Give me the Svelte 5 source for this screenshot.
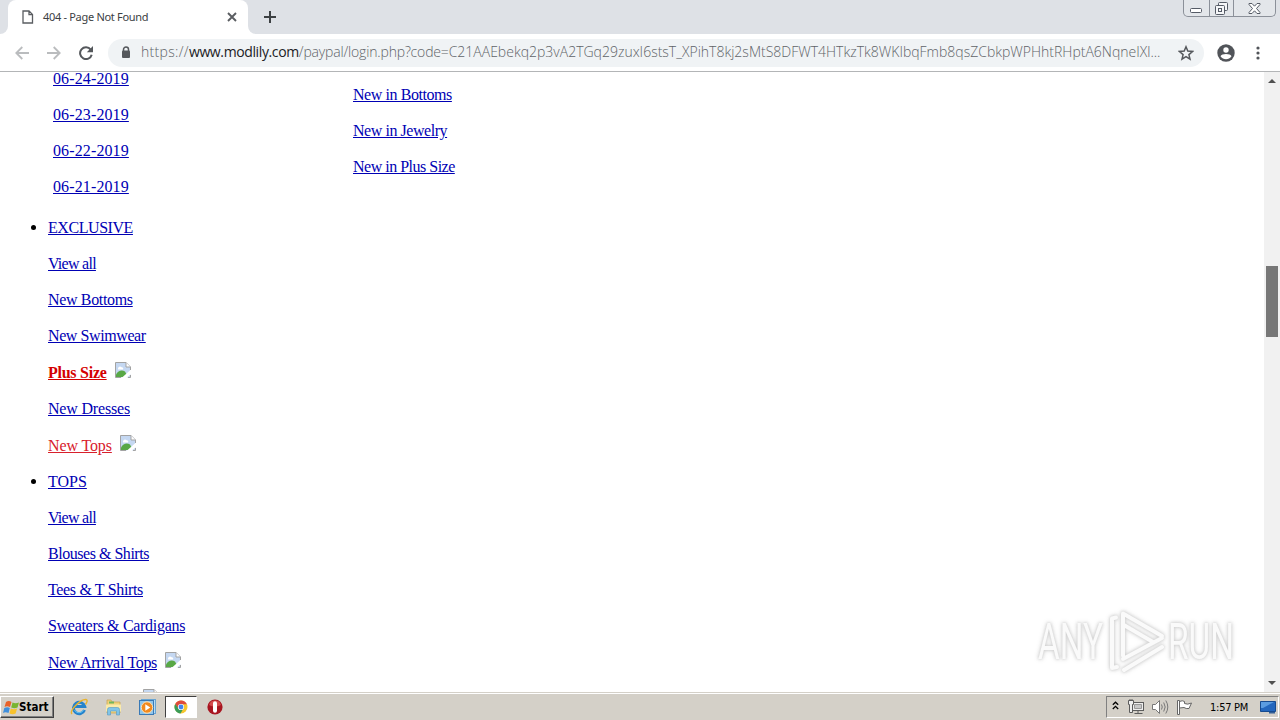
<script>
  const url = {
    scheme: "https://",
    host: "www.modlily.com",
    path: "/paypal/login.php?code=",
    code: "C21AAEbekq2p3vA2TGq29zuxI6stsT_XPihT8kj2sMtS8DFWT4HTkzTk8WKIbqFmb8qsZCbkpWPHhtRHptA6NqneIXl...",
  };

  const dates = ["06-24-2019", "06-23-2019", "06-22-2019", "06-21-2019"];

  // track = letter spacing in px
  const newIn = [
    { text: "New in Bottoms", track: -0.43 },
    { text: "New in Jewelry", track: -0.45 },
    { text: "New in Plus Size", track: -0.5 },
  ];

  const sections = [
    {
      title: "EXCLUSIVE",
      track: -0.44,
      links: [
        { text: "View all", track: -0.72 },
        { text: "New Bottoms", track: -0.34 },
        { text: "New Swimwear", track: -0.41 },
        { text: "Plus Size", track: -0.25, img: true, tone: "hot" },
        { text: "New Dresses", track: -0.18 },
        { text: "New Tops", track: -0.12, img: true, tone: "red" },
      ],
    },
    {
      title: "TOPS",
      track: 0,
      links: [
        { text: "View all", track: -0.72 },
        { text: "Blouses & Shirts", track: -0.47 },
        { text: "Tees & T Shirts", track: -0.34 },
        { text: "Sweaters & Cardigans", track: -0.3 },
        { text: "New Arrival Tops", track: -0.32, img: true },
        { text: "", img: true },
      ],
    },
  ];
</script>

{#snippet broken()}
  <svg class="broken" width="16" height="16" viewBox="0 0 16 16">
    <path d="M.5.5H11L15.500 5v10.500H.5z" fill="#c5d8f2" />
    <path d="M3 6.500a2 2 0 0 1 3.500-1.300A1.500 1.500 0 0 1 8 7.500H3z" fill="#fff" />
    <path d="M1 15v-2.500c2-4 6-5 9-3l3 5.500z" fill="#58a846" />
    <path d="M6.500 16L16 7.500V12l-4.500 4z" fill="#fff" />
    <path d="M6 15.500H.5V.5H11L15.500 5v3M15.500 13v2.500H13" fill="none" stroke="#a3a3a3" />
    <path d="M11 .5V5h4.500" fill="#fff" stroke="#a3a3a3" />
  </svg>
{/snippet}

<div class="screen">
  <header class="tabs">
    <div class="corner left"></div>
    <div class="tab">
      <svg width="12" height="14" viewBox="0 0 12 14" fill="none" stroke="#5a5d61" stroke-width="1.300">
        <path d="M1 1h6l3.500 3.500V13H1zM7 1v3.700h3.500" />
      </svg>
      <span class="title">404 - Page Not Found</span>
      <svg class="close" width="10" height="10" viewBox="0 0 10 10" stroke="#5a5d61" stroke-width="1.900">
        <path d="M1 1l8 8M9 1L1 9" />
      </svg>
    </div>
    <div class="corner right"></div>
    <svg class="plus" width="12" height="12" viewBox="0 0 12 12" stroke="#3c4043" stroke-width="2">
      <path d="M6 0v12M0 6h12" />
    </svg>
    <div class="winbtns">
      <span class="wb">
        <svg width="13" height="6" viewBox="0 0 13 6"><rect x=".5" y=".5" width="11" height="4" rx="1" fill="#fff" stroke="#555b66" /></svg>
      </span>
      <span class="wb mid">
        <svg width="13" height="13" viewBox="0 0 13 13" fill="#f5f6f8" stroke="#555b66">
          <rect x="3.500" y=".5" width="9" height="8" rx="1" />
          <rect x=".5" y="3.500" width="9" height="9" rx="1" />
          <rect x="3.500" y="6.500" width="3" height="3" />
        </svg>
      </span>
      <span class="wb last">
        <svg width="13" height="11" viewBox="0 0 13 11" fill="#fff" stroke="#555b66">
          <path d="M1 .5h3l2.500 2.700L9 .5h3v1L8.500 5.500 12 9.500v1H9L6.500 7.800 4 10.500H1v-1l3.500-4L1 1.500z" />
        </svg>
      </span>
    </div>
  </header>

  <nav class="toolbar">
    <svg class="nav" width="14" height="14" viewBox="0 0 14 14" fill="none" stroke="#babcbe" stroke-width="1.800">
      <path d="M14 7H1.500M7.300 1L1.300 7l6 6" />
    </svg>
    <svg class="nav" width="14" height="14" viewBox="0 0 14 14" fill="none" stroke="#babcbe" stroke-width="1.800">
      <path d="M0 7h12.500M6.700 1l6 6-6 6" />
    </svg>
    <svg class="nav" width="14" height="14" viewBox="0 0 14 14">
      <path d="M11.700 3.600A5.900 5.900 0 1 0 12.700 8.700" fill="none" stroke="#55585c" stroke-width="2" />
      <path d="M14 0v6.200H7.800z" fill="#55585c" />
    </svg>
    <div class="omnibox">
      <svg class="lock" width="10" height="13" viewBox="0 0 10 13">
        <path d="M2.500 6V3.500a2.500 2.500 0 0 1 5 0V6" fill="none" stroke="#55585c" stroke-width="1.500" />
        <rect x="1" y="4.500" width="8" height="7.500" rx="1" fill="#55585c" />
      </svg>
      <div class="url">
        <span class="scheme">{url.scheme}</span><span class="host">{url.host}</span><span class="path">{url.path}</span><span class="code">{url.code}</span>
      </div>
      <svg class="star" width="16" height="16" viewBox="0 0 16 16" fill="none" stroke="#55585c" stroke-width="1.500">
        <path d="M8 1.800l1.800 4.300 4.700.4-3.600 3.100 1.100 4.600L8 11.700l-4 2.500 1.100-4.600L1.500 6.500l4.700-.4z" />
      </svg>
    </div>
    <svg class="user" width="18" height="18" viewBox="0 0 18 18">
      <circle cx="9" cy="9" r="8.700" fill="#515459" />
      <circle cx="9" cy="6" r="2.700" fill="#fff" />
      <path d="M3.500 12.200c1-3 10-3 11 0-2.500 4-8.500 4-11 0z" fill="#fff" />
    </svg>
    <svg class="dots" width="4" height="14" viewBox="0 0 4 14" fill="#515459">
      <circle cx="2" cy="2" r="1.600" /><circle cx="2" cy="7" r="1.600" /><circle cx="2" cy="12" r="1.600" />
    </svg>
  </nav>

  <div class="view">
    <main>
      <div class="columns">
        <div class="dates">
          {#each dates as date}
            <div class="row"><a href="#top">{date}</a></div>
          {/each}
        </div>
        <div class="newin">
          {#each newIn as item}
            <div class="row"><a href="#top" style:letter-spacing="{item.track}px">{item.text}</a></div>
          {/each}
        </div>
      </div>
      {#each sections as section}
        <section>
          <div class="row head">
            <i class="bullet"></i>
            <a href="#top" style:letter-spacing="{section.track}px">{section.title}</a>
          </div>
          {#each section.links as link}
            <div class="row" class:pic={link.img}>
              {#if link.text}
                <a href="#top" class={link.tone} style:letter-spacing="{link.track}px">{link.text}</a>
              {:else}
                <span class="gap"></span>
              {/if}
              {#if link.img}{@render broken()}{/if}
            </div>
          {/each}
        </section>
      {/each}
    </main>

    <div class="scrollbar">
      <svg width="8" height="4" viewBox="0 0 8 4" fill="#505050"><path d="M0 4l4-4 4 4z" /></svg>
      <div class="thumb"></div>
      <svg width="8" height="4" viewBox="0 0 8 4" fill="#505050"><path d="M0 0l4 4 4-4z" /></svg>
    </div>

    <svg class="watermark" width="220" height="80" viewBox="0 0 220 80">
      <g class="word">
        <text x="8" y="53" textLength="65" lengthAdjust="spacingAndGlyphs">ANY</text>
        <text x="138" y="53" textLength="66" lengthAdjust="spacingAndGlyphs">RUN</text>
      </g>
      <g class="play">
        <path d="M86 11.500l-4 1V62l5-1" />
        <path d="M93 50V7.500L132 30" />
        <path d="M93 18.500L123 36" />
        <path d="M93 53l39-21" />
        <path d="M94 64l38-23" />
      </g>
    </svg>
  </div>

  <footer class="taskbar">
    <div class="start">
      <svg width="17" height="15" viewBox="0 0 17 15">
        <path d="M3 2c2-1.500 4-1 5.500 0L7 7C5 6 3 6 1.500 7z" fill="#e8622a" />
        <path d="M9.500 2.400c2 1 4 1 6.500 0L14.500 7.500c-2 1-4 1-6.300 0z" fill="#79b530" />
        <path d="M1.300 8c2-1 4-1 5.500 0l-1.300 5c-2-1-4-1-5.500 0z" fill="#3f8fdc" />
        <path d="M7.800 8.500c2 1 4 1 6.300 0l-1.500 5c-2 1-4 1-6.100 0z" fill="#f8c22c" />
      </svg>
      <span>Start</span>
    </div>
    <div class="apps">
      <span class="app">
        <svg width="18" height="18" viewBox="0 0 18 18" fill="none">
          <path d="M14.500 12a5.700 5.700 0 1 1 .2-3.500H5" stroke="#2583cc" stroke-width="3" />
          <path d="M13.500 12a5 5 0 0 1-9 0" stroke="#65c4f2" />
          <path d="M2 16C-1 13 10 1 16 1.500c2 .5 1 3-.5 5" stroke="#e9b32c" stroke-width="1.400" />
        </svg>
      </span>
      <span class="app">
        <svg width="17" height="17" viewBox="0 0 17 17">
          <path d="M2 1h4l1 2h8v11H2z" fill="#efd27b" stroke="#c9a24a" stroke-width=".7" />
          <path d="M4 2.500h5v2H4z" fill="#70b75d" />
          <path d="M1 5.500h15v7H1z" fill="#faeaa9" />
          <path d="M2.500 16v-5.500q0-2 2-2h8q2 0 2 2V16h-3v-4h-6v4z" fill="#80c4e8" stroke="#5598c2" stroke-width=".6" />
        </svg>
      </span>
      <span class="app">
        <svg width="17" height="17" viewBox="0 0 17 17">
          <rect x="2.500" y=".5" width="14" height="14" fill="#b8dcf3" stroke="#68a5d3" />
          <rect x=".5" y="1.500" width="14" height="14" fill="#8fc6ec" stroke="#3979b6" />
          <circle cx="8" cy="8.500" r="5.700" fill="#f28a1e" stroke="#fce1b8" />
          <path d="M6.300 5.300l5 3.200-5 3.200z" fill="#fff" />
        </svg>
      </span>
      <span class="app on">
        <svg width="14" height="14" viewBox="0 0 14 14">
          <circle cx="7" cy="7" r="6.500" fill="#f6c62e" />
          <path d="M1.200 3.900A6.500 6.500 0 0 1 12.900 4.200H7L4.300 8.800z" fill="#df4b3d" />
          <path d="M1.200 3.900A6.500 6.500 0 0 0 6.500 13.500l3-5H4.600z" fill="#3a9b57" />
          <circle cx="7" cy="7" r="3.100" fill="#fff" />
          <circle cx="7" cy="7" r="2.400" fill="#4284ed" />
        </svg>
      </span>
      <span class="app">
        <svg width="16" height="16" viewBox="0 0 16 16">
          <circle cx="8" cy="8" r="7.600" fill="#a81520" />
          <path d="M2 6a6.300 6.300 0 0 1 12 0q-6 3-12 0z" fill="#d34a4c" />
          <rect x="6" y="2.300" width="4" height="11.400" rx="2" fill="#fff" />
        </svg>
      </span>
    </div>
    <div class="tray">
      <svg class="chev" width="7" height="9" viewBox="0 0 7 9" fill="none" stroke="#000" stroke-width="1.300">
        <path d="M.8 3.800l2.700-2.600 2.700 2.600M.8 8l2.700-2.600L6.200 8" />
      </svg>
      <svg class="net" width="17" height="16" viewBox="0 0 17 16" fill="#eee" stroke="#5c5c5c">
        <rect x="4.500" y="3.500" width="11" height="8" />
        <path d="M6.500 5.500h7v4h-7z" fill="#c8c8c8" stroke="#999" />
        <path d="M10 12v2.500M6.500 14.500h8" />
        <path d="M.5 1.500h5v4h-1v8h-3v-8h-1zM2 0v2M4 0v2" />
      </svg>
      <svg class="vol" width="17" height="16" viewBox="0 0 17 16" fill="none" stroke="#777">
        <path d="M.5 5.500h3l4-4v13l-4-4h-3z" fill="#fff" />
        <path d="M9.500 5.500q1.500 2.500 0 5M11.700 3.500q3 4.500 0 9M13.800 1.500q4 6.500 0 13" />
      </svg>
      <svg class="flag" width="17" height="16" viewBox="0 0 17 16" fill="#fff" stroke="#666">
        <path d="M3.500 2.500q3-1.500 5 0v2q3 1.500 7-.5l-2.500 5.500q-3 .5-5-1l-4.500.500" />
        <path d="M1.500 1.500h2v14h-2z" />
      </svg>
      <span class="clock">1:57 PM</span>
      <svg class="desk" width="16" height="14" viewBox="0 0 16 14">
        <path d="M.5 1.500h15v10H.5z" fill="#2467bd" stroke="#174b8f" />
        <path d="M1 2h13L3 8H1z" fill="#5b9ce0" />
        <path d="M9 12h6v1.500H9z" fill="#335f96" />
      </svg>
    </div>
  </footer>
</div>

<style>
  :global(body) {
    background: #fff;
    overflow: hidden;
  }
  .screen {
    display: flex;
    flex-direction: column;
    width: 1280px;
    height: 720px;
    overflow: hidden;
  }
  .screen * {
    box-sizing: border-box;
  }
  svg {
    flex: none;
    display: block;
  }

  .tabs {
    display: flex;
    height: 34px;
    background: #dee1e6;
  }
  .corner {
    width: 8px;
    background: #fff;
  }
  .corner::after {
    content: "";
    display: block;
    height: 34px;
    background: #dee1e6;
  }
  .corner.left::after {
    border-bottom-right-radius: 8px;
  }
  .corner.right::after {
    border-bottom-left-radius: 8px;
  }
  .tab {
    display: flex;
    align-items: center;
    width: 240px;
    padding: 0 11px 0 14px;
    background: #fff;
    border-radius: 8px 8px 0 0;
  }
  .title {
    margin: -1px 0 0 9px;
    font: 11px "Noto Sans", sans-serif;
    letter-spacing: -0.31px;
    color: #3c4043;
    white-space: nowrap;
  }
  .close {
    margin-left: auto;
  }
  .plus {
    margin: 11px 0 0 8px;
  }
  .winbtns {
    display: flex;
    width: 93px;
    height: 17px;
    margin: 0 4px 0 auto;
    border: 1px solid #8b9099;
    border-top: 0;
    border-radius: 0 0 5px 5px;
    background: #e3e6ea;
  }
  .wb {
    display: flex;
    justify-content: center;
    width: 25px;
    padding-top: 8px;
  }
  .mid {
    padding-top: 2px;
    border: solid #8b9099;
    border-width: 0 1px;
  }
  .last {
    width: 41px;
    padding-top: 3px;
  }

  .toolbar {
    display: flex;
    align-items: center;
    height: 38px;
    padding: 0 20px 0 15px;
    border-bottom: 1px solid #b3b5b7;
    background: #fff;
  }
  .nav {
    margin-right: 18px;
  }
  .omnibox {
    display: flex;
    align-items: center;
    width: 1096px;
    height: 28px;
    margin-left: -3px;
    padding: 0 10px 0 13px;
    border-radius: 14px;
    background: #f0f3f5;
  }
  .url {
    width: 1022px;
    margin: -2px 0 0 10px;
    font: 300 14px "Open Sans", sans-serif;
    white-space: nowrap;
    color: #5f6368;
  }
  .scheme {
    letter-spacing: 0.32px;
  }
  .host {
    color: #202124;
    font-weight: 400;
    letter-spacing: -0.38px;
  }
  .path {
    letter-spacing: -0.17px;
  }
  .star {
    margin-left: auto;
  }
  .user {
    margin-left: 13px;
  }
  .dots {
    margin-left: auto;
  }

  .view {
    position: relative;
    display: flex;
    height: 620px;
    overflow: hidden;
  }
  main {
    flex: 1;
    height: 620px;
    padding-left: 48px;
    overflow: hidden;
    font: 16px/18px "Liberation Serif", "Times New Roman", serif;
  }
  .columns {
    display: flex;
    height: 138px;
  }
  .dates {
    width: 300px;
    margin-top: -11px;
    padding-left: 5px;
    letter-spacing: 0.12px;
  }
  .newin {
    padding: 5px 0 0 5px;
  }
  .row {
    display: flex;
    align-items: flex-end;
    height: 36px;
    padding-bottom: 9px;
    white-space: nowrap;
  }
  .pic {
    height: 37px;
  }
  .head {
    margin-left: -17px;
  }
  .bullet {
    width: 5px;
    height: 5px;
    margin: 0 12px 7px 0;
    border-radius: 50%;
    background: #000;
  }
  a {
    color: #0000b4;
    text-decoration: underline;
  }
  .hot {
    color: #d40000;
    font-weight: bold;
  }
  .red {
    color: #d8202c;
  }
  .gap {
    width: 87px;
  }
  .broken {
    margin: 0 0 4px 8px;
  }
  .scrollbar {
    display: flex;
    flex-direction: column;
    align-items: center;
    width: 16px;
    padding: 7px 0;
    background: #f1f1f1;
  }
  .thumb {
    width: 12px;
    height: 71px;
    margin: 183px 0 auto;
    background: #777;
  }
  .watermark {
    position: absolute;
    left: 1030px;
    top: 534px;
    overflow: visible;
    filter: drop-shadow(0 0 1.5px #ccc) drop-shadow(0 0 2px #ddd);
  }
  .word {
    font: 50px Roboto, sans-serif;
    fill: #fafafa;
  }
  .play {
    fill: none;
    stroke: #fafafa;
    stroke-width: 4;
    stroke-linejoin: round;
    stroke-linecap: round;
  }

  .taskbar {
    display: flex;
    align-items: center;
    height: 28px;
    padding-top: 2px;
    background: #d4d0c8;
    box-shadow: inset 0 1px #d4d0c8, inset 0 2px #fff;
  }
  .start {
    display: flex;
    align-items: center;
    width: 54px;
    height: 22px;
    padding-left: 2px;
    border: 1px solid;
    border-color: #fff #404040 #404040 #fff;
    box-shadow: inset -1px -1px #808080;
    font: bold 11.5px "DejaVu Sans Condensed", "DejaVu Sans", sans-serif;
  }
  .start span {
    margin-left: -1px;
  }
  .apps {
    display: flex;
    margin-left: 9px;
    gap: 2px;
  }
  .app {
    display: flex;
    align-items: center;
    justify-content: center;
    width: 32px;
    height: 22px;
  }
  .on {
    background: #fff;
    border: 1px solid;
    border-color: #404040 #fff #fff #404040;
  }
  .tray {
    display: flex;
    align-items: center;
    width: 173px;
    height: 22px;
    margin: 0 1px 0 auto;
    padding-left: 5px;
    border: 1px solid;
    border-color: #808080 #fff #fff #808080;
  }
  .chev {
    margin-bottom: 3px;
  }
  .net {
    margin-left: 9px;
  }
  .vol {
    margin-left: 7px;
  }
  .flag {
    margin-left: 7px;
  }
  .clock {
    width: 40px;
    margin-left: 17px;
    font: 11px "DejaVu Sans Condensed", "DejaVu Sans", sans-serif;
    letter-spacing: -0.25px;
    white-space: nowrap;
  }
  .desk {
    margin-left: 10px;
  }
</style>
